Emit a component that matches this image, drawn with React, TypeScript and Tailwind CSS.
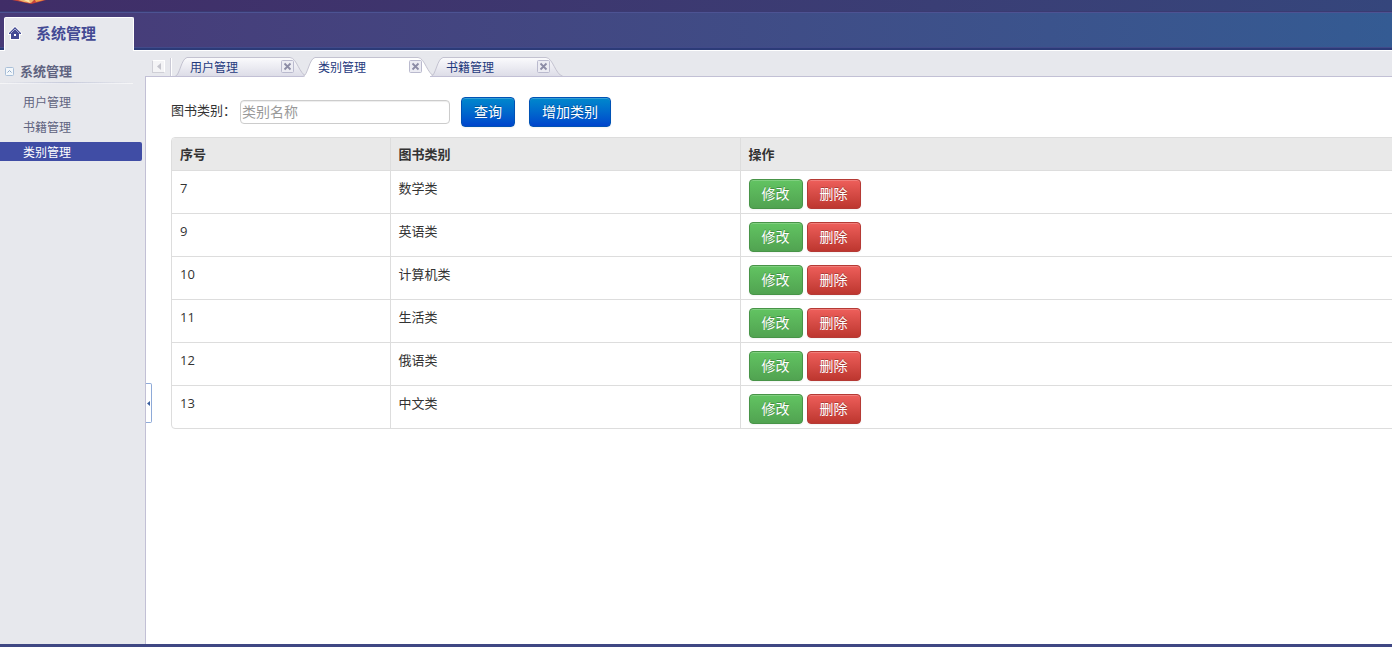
import { useState } from "react"
import clsx from "clsx"

const menu = ["用户管理", "书籍管理", "类别管理"]
const openTabs = ["用户管理", "类别管理", "书籍管理"]

const categories = [
  { id: 7, name: "数学类" },
  { id: 9, name: "英语类" },
  { id: 10, name: "计算机类" },
  { id: 11, name: "生活类" },
  { id: 12, name: "俄语类" },
  { id: 13, name: "中文类" },
]

const buttonColors = {
  blue: "border-[#0052b5] bg-linear-to-b from-[#0088cc] to-[#0044cc]",
  green: "border-[#489448] bg-linear-to-b from-[#62c462] to-[#51a351]",
  red: "border-[#b53a35] bg-linear-to-b from-[#ee5f5b] to-[#bd362f]",
}

function Button({ color, children }: { color: keyof typeof buttonColors; children: string }) {
  return (
    <button
      type="button"
      className={clsx(
        "h-[30px] rounded border px-3 text-sm leading-5 text-white text-shadow-[0_-1px_0_rgba(0,0,0,0.25)] shadow-[inset_0_1px_0_rgba(255,255,255,0.2),0_1px_2px_rgba(0,0,0,0.05)]",
        buttonColors[color],
      )}
    >
      {children}
    </button>
  )
}

function HomeIcon() {
  return (
    <svg width="14" height="14" viewBox="0 0 14 14" aria-hidden="true">
      <path
        d="M7 0 L14 7 V9 H12 V14 H2 V9 H0 V7 Z"
        fill="#fff"
      />
      <path d="M7 1 L13 7 V8 H11 V13 H3 V8 H1 V7 Z" fill="#434a94" />
      <path d="M2.5 7.5 L7 3 L11.5 7.5" fill="none" stroke="#c4c7e2" strokeWidth="0.8" />
      <rect x="6" y="8" width="2" height="2" fill="#fff" />
    </svg>
  )
}

function TabShape({ active }: { active: boolean }) {
  return (
    <svg className="absolute -left-1 top-0" width="136" height="20" viewBox="0 0 136 20" aria-hidden="true">
      <defs>
        <linearGradient id="tab-fill" x1="0" y1="0" x2="0" y2="1">
          <stop offset="0" stopColor="#fbfbfd" />
          <stop offset="1" stopColor="#dcdce7" />
        </linearGradient>
      </defs>
      <path
        d="M1 19.5 C6 18 7 2 13 0.5 H116 C123 1 125 17 133 19.5 Z"
        fill={active ? "#fff" : "url(#tab-fill)"}
      />
      <path
        d="M1 19.5 C6 18 7 2 13 0.5 H116 C123 1 125 17 133 19.5"
        fill="none"
        stroke="#c3c2d0"
      />
      <path d={active ? "M3 19.5 H131" : "M0 19.5 H134"} stroke={active ? "#fff" : "#c2c0d5"} />
    </svg>
  )
}

export default function App() {
  const [current, setCurrent] = useState("类别管理")

  return (
    <div className="flex h-screen flex-col overflow-hidden bg-[#e7e8ed] font-['Open_Sans','Noto_Sans_CJK_SC',sans-serif] text-[13px] text-[#333]">
      {/* Header */}
      <header>
        <div className="h-3 overflow-hidden border-b border-[#3b3a72] bg-linear-to-r from-[#402d67] to-[#35467c] pl-3">
          <svg width="36" height="4" viewBox="0 0 36 4" aria-hidden="true">
            <path d="M0 0 H34 L27 2 L19 4 L10 2 Z" fill="#c9443a" />
            <path d="M6 0 H22 L19 3 L12 2 Z" fill="#f0b56c" />
            <path d="M12 0 H17 L18 3 Z" fill="#fbe3a8" />
            <path d="M23 0 H32 L24 2 Z" fill="#f0a04b" />
          </svg>
        </div>
        <div className="flex h-[39px] items-end border-b border-white bg-linear-to-r from-[#473a77] to-[#345b93] pl-1 shadow-[inset_0_1px_0_#4d5393,inset_0_-2px_0_#2c3b78,inset_0_-3px_0_#414a8a]">
          <a
            href="#system"
            className="-mb-px flex h-[34px] w-[130px] items-center rounded-t-xs border border-b-0 border-white bg-[#e7e8ed] pb-[3px] pl-[3px] text-[15px] font-bold text-[#434a94]"
          >
            <HomeIcon />
            <span className="ml-[14px]">系统管理</span>
          </a>
        </div>
      </header>

      <div className="flex min-h-0 flex-1">
        {/* Sidebar */}
        <aside className="w-[145px] shrink-0 pt-[11px]">
          <h2 className="flex h-5 items-center gap-[5px] pl-[5px] font-bold text-[#5f6380]">
            <svg width="10" height="10" viewBox="0 0 10 10" aria-hidden="true">
              <rect x="0.5" y="0.5" width="8" height="8" rx="1" fill="#f3f7fb" stroke="#a9bfd8" />
              <path d="M2.5 5.5 L4.5 3.5 L6.5 5.5" fill="none" stroke="#8fa9c8" />
            </svg>
            系统管理
          </h2>
          <div className="mr-3 h-[2px] border-b border-white/60 bg-linear-to-r from-transparent via-[#c6cadb] to-transparent" />
          <ul className="mt-2 flex flex-col gap-[6px] pr-[3px] text-xs leading-4 text-[#5f6380]">
            {menu.map((item) => (
              <li key={item}>
                <a
                  href="#menu"
                  onClick={() => setCurrent(item)}
                  className={clsx("block rounded-r-xs pl-[23px] pt-[3px]", current === item && "bg-[#404da5] text-white")}
                >
                  {item}
                </a>
              </li>
            ))}
          </ul>
        </aside>

        <main className="flex min-w-0 flex-1 flex-col">
          {/* Tab strip */}
          <div className="flex h-[26px] shrink-0 items-end border-b border-[#c2c0d5] pl-[7px]">
            <button
              type="button"
              aria-label="Scroll tabs left"
              className="mb-[3px] flex size-[13px] items-center justify-center border border-b-[#cfcfd6] border-l-[#cfcfd6] border-r-white border-t-white bg-[#f4f4f6]"
            >
              <svg width="4" height="7" viewBox="0 0 4 7" aria-hidden="true">
                <path d="M4 0 V7 L0 3.5 Z" fill="#c4c4cc" />
              </svg>
            </button>
            <div className="ml-[5px] h-[18px] w-[2px] border-l border-[#cacad6] bg-white" />
            <div className="-mb-px ml-[6px] flex">
              {openTabs.map((tab) => (
                <div key={tab} className="relative h-5 w-32">
                  <TabShape active={tab === current} />
                  <div className="relative flex h-5 items-start justify-between px-3 pt-[3px]">
                    <button
                      type="button"
                      onClick={() => setCurrent(tab)}
                      className="text-xs leading-4 text-[#1f3a7d]"
                    >
                      {tab}
                    </button>
                    <button type="button" aria-label={"关闭" + tab}>
                      <svg className="block" width="13" height="13" viewBox="0 0 13 13" aria-hidden="true">
                        <rect x="0.5" y="0.5" width="12" height="12" rx="1" fill="#ececf3" stroke="#babace" />
                        <path d="M3.5 3.5 L9.5 9.5 M9.5 3.5 L3.5 9.5" stroke="#8c8ca6" strokeWidth="1.8" />
                      </svg>
                    </button>
                  </div>
                </div>
              ))}
            </div>
          </div>

          {/* Content */}
          <section className="relative flex-1 overflow-hidden border-l border-[#c2c0d5] bg-white pl-[25px] pt-5">
            <button
              type="button"
              aria-label="Collapse sidebar"
              className="absolute left-0 top-[306px] flex h-10 w-[6px] items-center justify-center rounded-r-xs border border-l-0 border-[#8eaad8]"
            >
              <svg width="3" height="5" viewBox="0 0 3 5" aria-hidden="true">
                <path d="M3 0 V5 L0 2.5 Z" fill="#3b5f9e" />
              </svg>
            </button>

            <form className="flex h-[30px] items-center" onSubmit={(e) => e.preventDefault()}>
              <label htmlFor="category" className="w-[69px] shrink-0 whitespace-nowrap pb-[3px]">
                图书类别：
              </label>
              <input
                id="category"
                type="text"
                placeholder="类别名称"
                className="mr-[11px] h-6 w-[210px] rounded border border-[#ccc] px-px pb-[2px] text-sm shadow-[inset_0_1px_1px_rgba(0,0,0,0.075)] placeholder:text-[#999]"
              />
              <div className="flex gap-[14px]">
                <Button color="blue">查询</Button>
                <Button color="blue">增加类别</Button>
              </div>
            </form>

            {/* The table runs a little past the right edge of the pane */}
            <div className="-mr-2 mt-[10px] overflow-hidden rounded border border-[#ddd]">
              <table className="w-full table-fixed text-left leading-[18px]">
                <thead className="bg-[#e9e9e9] leading-4">
                  <tr>
                    <th className="h-8 w-[218px] px-2 font-bold">序号</th>
                    <th className="w-[350px] border-l border-[#ddd] px-2 font-bold">图书类别</th>
                    <th className="border-l border-[#ddd] px-2 font-bold">操作</th>
                  </tr>
                </thead>
                <tbody>
                  {categories.map((category) => (
                    <tr key={category.id} className="border-t border-[#ddd] align-top">
                      <td className="px-2 pt-2">{category.id}</td>
                      <td className="border-l border-[#ddd] px-2 pt-2">{category.name}</td>
                      <td className="border-l border-[#ddd] px-2 pb-1 pt-2">
                        <div className="flex gap-1">
                          <Button color="green">修改</Button>
                          <Button color="red">删除</Button>
                        </div>
                      </td>
                    </tr>
                  ))}
                </tbody>
              </table>
            </div>
          </section>
        </main>
      </div>

      <footer className="h-[3px] bg-[#3f4783]" />
    </div>
  )
}
